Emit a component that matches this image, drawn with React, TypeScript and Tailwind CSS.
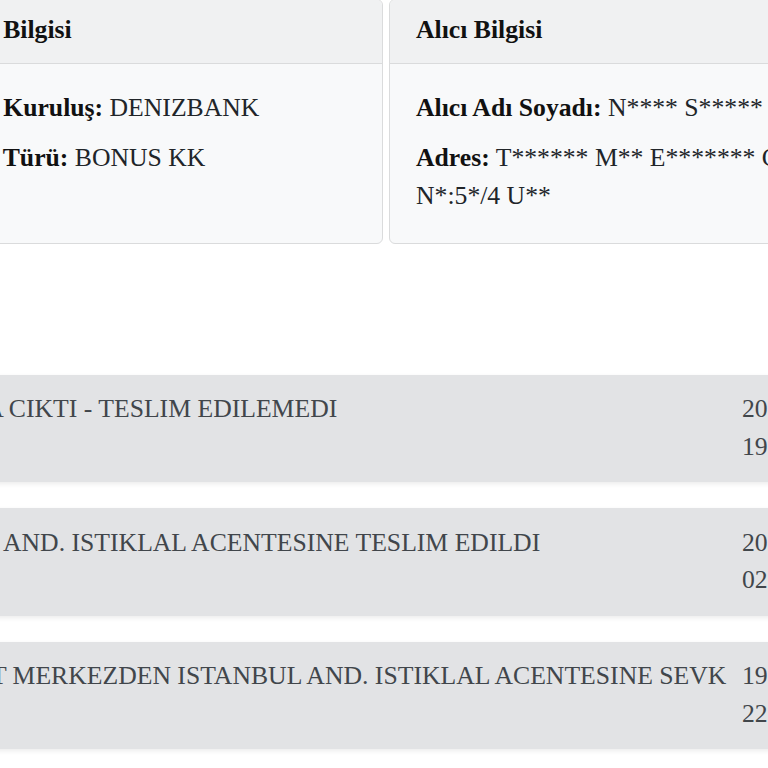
const rows = [
  {
    text: 'DAGITIMA CIKTI - TESLIM EDILEMEDI',
    date: '20.03.2024',
    time: '19:42',
  },
  {
    text: 'ISTANBUL AND. ISTIKLAL ACENTESINE TESLIM EDILDI',
    date: '20.03.2024',
    time: '02:15',
  },
  {
    text: 'ESENYURT MERKEZDEN ISTANBUL AND. ISTIKLAL ACENTESINE SEVK EDILDI',
    date: '19.03.2024',
    time: '22:08',
  },
];

interface InfoCardProps {
  title: string;
  width: string;
  children: React.ReactNode;
}

const InfoCard = ({ title, width, children }: InfoCardProps) => {
  return (
    <div
      className={`${width} shrink-0 overflow-hidden rounded-[6px] border border-[#dadbdc] bg-[#f8f9fa]`}
    >
      <div className="border-b border-[#dadbdc] bg-[#f0f1f2] px-[26px] pt-[11px] pb-[14px] font-bold text-[#111]">
        {title}
      </div>
      <div className="px-[26px] pt-[25.5px] pb-[28.5px]">{children}</div>
    </div>
  );
};

const Line = ({ label, children, last = false }: { label: string; children: React.ReactNode; last?: boolean }) => {
  return (
    <p className={last ? '' : 'mb-[12.5px]'}>
      <span className="font-bold text-[#111]">{label}</span> {children}
    </p>
  );
};

export default function App() {
  return (
    <div className="h-[768px] w-[768px] overflow-hidden bg-white font-['Liberation_Serif',serif] text-[25.7px] leading-[37.5px] text-[#212529]">
      <div className="-mt-px -ml-[83px] flex w-[1100px] gap-[6px]">
        <InfoCard title="Kart Bilgisi" width="w-[466px]">
          <Line label="Kart Kuruluş:">DENIZBANK</Line>
          <Line label="Kart Türü:" last>
            BONUS KK
          </Line>
        </InfoCard>
        <InfoCard title="Alıcı Bilgisi" width="w-[560px]">
          <Line label="Alıcı Adı Soyadı:">N**** S*****</Line>
          <Line label="Adres:" last>
            T****** M** E******* C******
            <br />
            N*:5*/4 U**
          </Line>
        </InfoCard>
      </div>

      <div className="-ml-[146px] mt-[131px] flex w-[1100px] flex-col gap-[26px]">
        {rows.map((row) => (
          <div
            key={row.text}
            className="flex bg-[#e2e3e5] pt-[15.5px] pb-[17px] pl-[20px] text-[#41464b] shadow-[0_2px_5px_rgba(0,0,0,0.08)]"
          >
            <div className="w-[862px] shrink-0">{row.text}</div>
            <div className="ml-[6px]">
              <div>{row.date}</div>
              <div>{row.time}</div>
            </div>
          </div>
        ))}
      </div>
    </div>
  );
}
